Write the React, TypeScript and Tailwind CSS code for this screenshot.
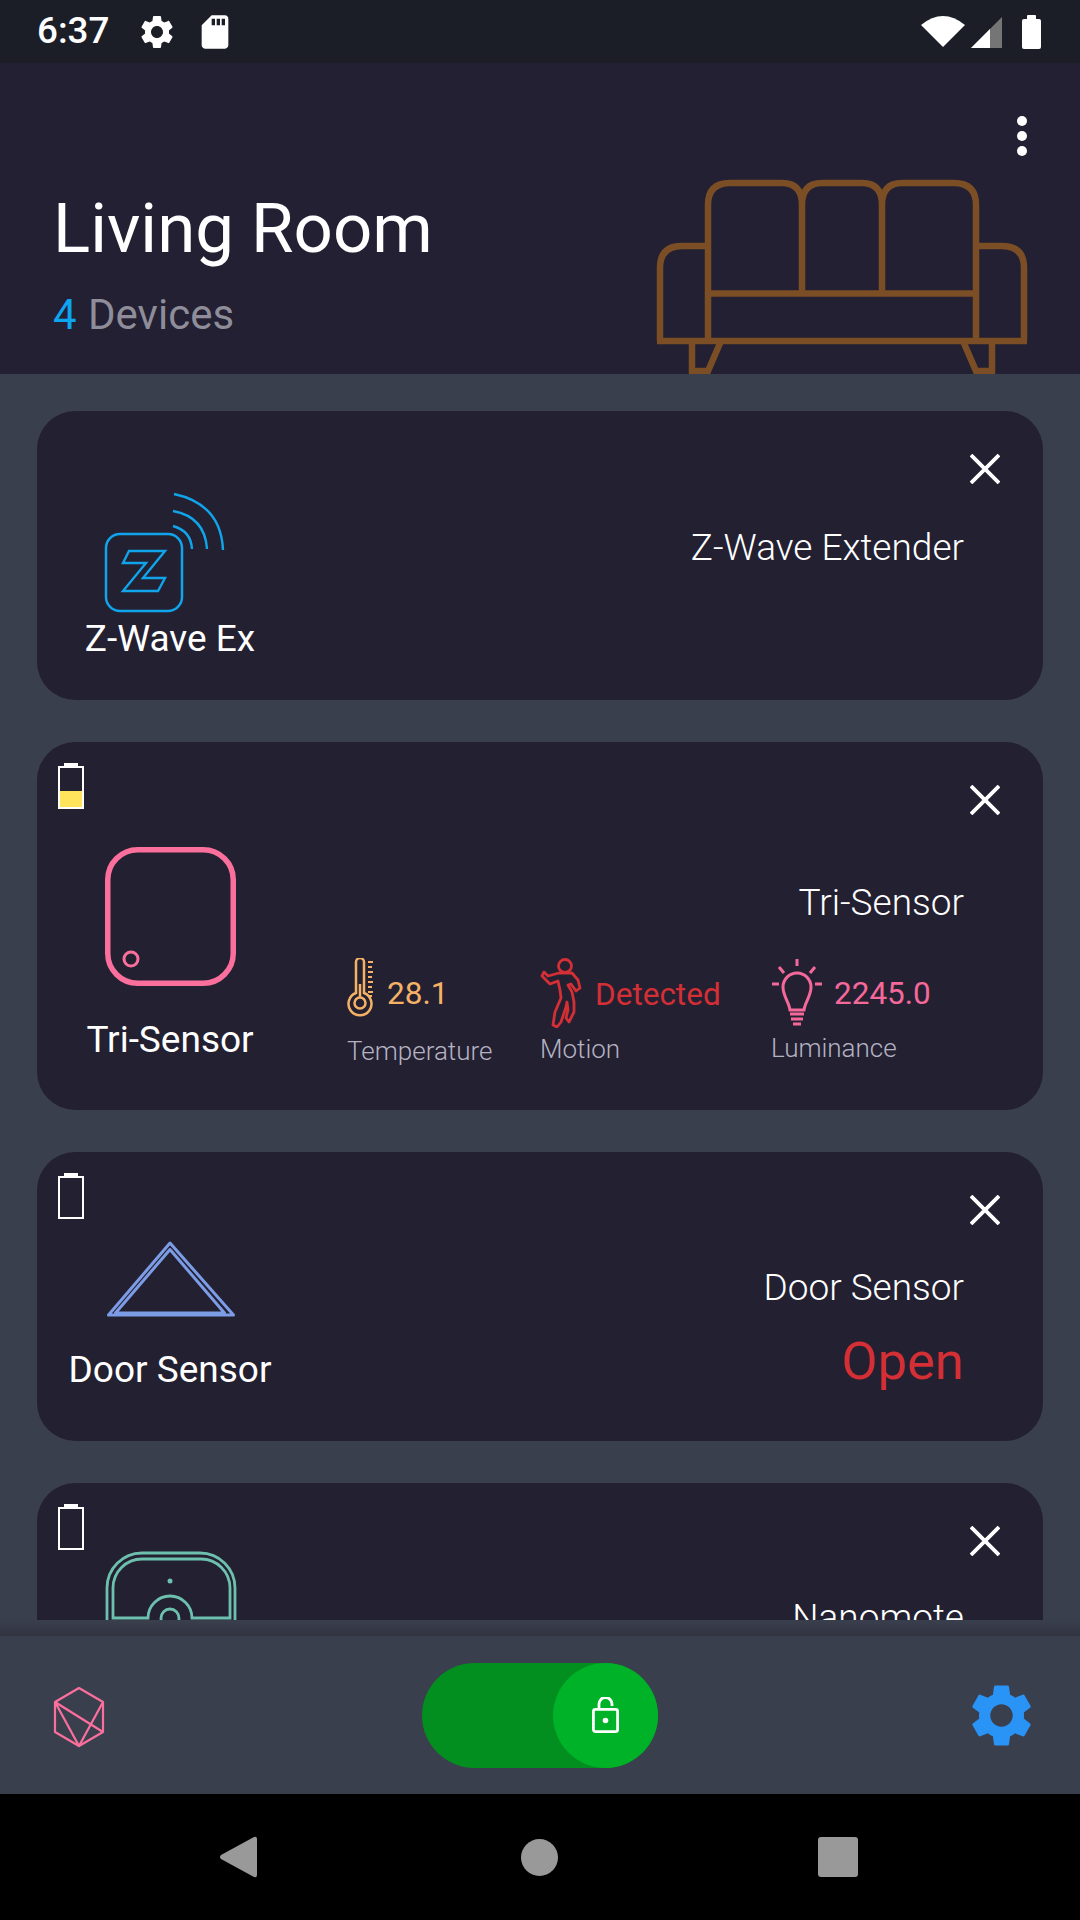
import type { ReactNode } from 'react'

const SETTINGS_PATH =
    'M19.14 12.94c.04-.3.06-.61.06-.94 0-.32-.02-.64-.07-.94l2.03-1.58c.18-.14.23-.41.12-.61l-1.92-3.32c-.12-.22-.37-.29-.59-.22l-2.39.96c-.5-.38-1.03-.7-1.62-.94l-.36-2.54c-.04-.24-.24-.41-.48-.41h-3.84c-.24 0-.43.17-.47.41l-.36 2.54c-.59.24-1.13.57-1.62.94l-2.39-.96c-.22-.08-.47 0-.59.22L2.74 8.87c-.12.21-.08.47.12.61l2.03 1.58c-.05.3-.09.63-.09.94s.02.64.07.94l-2.03 1.58c-.18.14-.23.41-.12.61l1.92 3.32c.12.22.37.29.59.22l2.39-.96c.5.38 1.03.7 1.62.94l.36 2.54c.05.24.24.41.48.41h3.84c.24 0 .44-.17.47-.41l.36-2.54c.59-.24 1.13-.56 1.62-.94l2.39.96c.22.08.47 0 .59-.22l1.92-3.32c.12-.22.07-.47-.12-.61l-2.01-1.58zM12 15.6c-1.98 0-3.6-1.62-3.6-3.6s1.62-3.6 3.6-3.6 3.6 1.62 3.6 3.6-1.62 3.6-3.6 3.6z'

function Battery({ level = 0 }: { level?: number }) {
    return (
        <div className="absolute left-[21px] top-[21px] flex w-[26px] flex-col items-center">
            <div className="h-[3px] w-[14px] bg-white" />
            <div className="flex h-[43px] w-[26px] flex-col justify-end border-2 border-white">
                {level > 0 && <div className="bg-[#ffe45c]" style={{ height: `${level}%` }} />}
            </div>
        </div>
    )
}

function CloseIcon() {
    return (
        <svg className="absolute right-[43px] top-[43px]" width="30" height="30" viewBox="0 0 30 30" fill="none" stroke="#fff" strokeWidth="3.8">
            <path d="M1 1 29 29M29 1 1 29" />
        </svg>
    )
}

function Card({ className, battery, children }: { className: string; battery?: number; children: ReactNode }) {
    return (
        <div className={`relative flex shrink-0 rounded-[38px] bg-[#232032] ${className}`}>
            {battery !== undefined && <Battery level={battery} />}
            <CloseIcon />
            {children}
        </div>
    )
}

function Sofa() {
    return (
        <svg width="400" height="214" viewBox="0 0 400 214" fill="none" stroke="#7c4e25" strokeWidth="6.5" className="block">
            <path d="M68 181V45Q68 23 90 23H142Q162 23 162 45V133M162 45Q162 23 182 23H222Q242 23 242 45V133M242 45Q242 23 262 23H314Q336 23 336 45V181" />
            <path d="M68 133.5H336M68 86H42Q20 86 20 108V181M336 86H362Q384 86 384 108V181M17 181H387" />
            <path d="M52 181V211H68L81 181M352 181V211H336L323 181" />
        </svg>
    )
}

function ZWaveIcon() {
    return (
        <svg width="140" height="125" viewBox="60 20 140 125" fill="none" stroke="#10a5ea" strokeWidth="2.5">
            <rect x="66" y="64" width="76" height="77" rx="14" />
            <path d="M89 81H125L103 108H125L118 121H83L106 93H83Z" strokeWidth="2.4" />
            <path d="M133 56Q151 61 152 79M133 41Q165 47 167 79M134 24Q181 34 183 80" strokeWidth="2.4" />
        </svg>
    )
}

function NanomoteIcon() {
    return (
        <svg width="140" height="90" viewBox="0 0 140 90" fill="none" stroke="#6dbfae" strokeWidth="2.8" className="shrink-0">
            <path d="M7 90V38A35 35 0 0 1 42 3H100A35 35 0 0 1 135 38V90" />
            <path d="M13 68V38A29 29 0 0 1 42 9H101A29 29 0 0 1 130 38V68H92A22 22 0 0 0 48 68Z" />
            <circle cx="70" cy="68" r="9" />
            <circle cx="70" cy="31" r="2.5" fill="#6dbfae" stroke="none" />
        </svg>
    )
}

function Stat({ width, icon, gap, value, color, label, labelClass }: { width: string; icon: ReactNode; gap: string; value: string; color: string; label: string; labelClass: string }) {
    return (
        <div className={`flex flex-col ${width}`}>
            <div className={`flex items-center ${gap}`}>
                {icon}
                <span className={`mt-[3px] text-[31.5px] leading-[40px] ${color}`}>{value}</span>
            </div>
            <span className={`text-[26px] font-light leading-[36px] text-[#b4b3c2] ${labelClass}`}>{label}</span>
        </div>
    )
}

export default function App() {
    return (
        <div className="flex h-[1920px] w-[1080px] flex-col overflow-hidden bg-[#3a3f4e] font-[Roboto,sans-serif] text-white">
            {/* status bar */}
            <div className="flex h-[63px] shrink-0 items-center bg-[#1c1e27] pl-[37px] pr-[39px]">
                <span className="w-[100px] text-[36.75px] font-medium leading-none">6:37</span>
                <svg width="40" height="40" viewBox="0 0 24 24" fill="#fff"><path d={SETTINGS_PATH} /></svg>
                <svg width="40" height="40" viewBox="0 0 24 24" fill="#fff" className="ml-[18px]"><path d="M18 2h-8L4.02 8 4 20c0 1.1.9 2 2 2h12c1.1 0 2-.9 2-2V4c0-1.1-.9-2-2-2zm-6 6h-2V4h2v4zm3 0h-2V4h2v4zm3 0h-2V4h2v4z" /></svg>
                <svg width="44" height="32" viewBox="0 0 44 32" fill="#fff" className="ml-auto">
                    <path d="M0 9Q22-9 44 9L22 31Z" />
                </svg>
                <svg width="31" height="32" viewBox="0 0 31 32" className="ml-[6px]">
                    <path d="M0 32 31 1V32Z" fill="#757575" />
                    <path d="M0 32 19 13V32Z" fill="#fff" />
                </svg>
                <div className="ml-[20px] flex w-[19px] flex-col items-center">
                    <div className="h-[4px] w-[9px] rounded-t-[1px] bg-white" />
                    <div className="h-[30px] w-[19px] rounded-[2px] bg-white" />
                </div>
            </div>

            {/* room header */}
            <div className="flex h-[311px] shrink-0 justify-between bg-[#222032] pl-[53px] pr-[40px]">
                <div className="flex flex-col pt-[121px]">
                    <h1 className="text-[69px] leading-[90px]">Living Room</h1>
                    <p className="mt-[16px] text-[42px] leading-[50px] text-[#8e8d99]">
                        <span className="mr-[1px] text-[#0ea5f0]">4</span> Devices
                    </p>
                </div>
                <div className="flex flex-col items-end">
                    <div className="mr-[13px] mt-[53px] flex flex-col gap-[5px]">
                        <div className="h-[10px] w-[10px] rounded-full bg-white" />
                        <div className="h-[10px] w-[10px] rounded-full bg-white" />
                        <div className="h-[10px] w-[10px] rounded-full bg-white" />
                    </div>
                    <div className="mt-auto"><Sofa /></div>
                </div>
            </div>

            {/* device list */}
            <div className="flex h-[1246px] shrink-0 flex-col gap-[42px] overflow-hidden px-[37px] pt-[37px]">
                <Card className="h-[289px]">
                    <div className="flex w-[266px] flex-col items-center pt-[79px]">
                        <ZWaveIcon />
                        <span className="mt-[2px] text-[37px] leading-[44px]">Z-Wave Ex</span>
                    </div>
                    <div className="flex flex-1 flex-col items-end pr-[79px] pt-[115px]">
                        <span className="text-[37px] font-light leading-[44px]">Z-Wave Extender</span>
                    </div>
                </Card>

                <Card className="h-[368px]" battery={42}>
                    <div className="flex w-[266px] flex-col items-center pt-[105px]">
                        <svg width="131" height="139" viewBox="0 0 131 139" fill="none" stroke="#fb6f9c">
                            <rect x="2.750" y="2.750" width="125.500" height="133.500" rx="30" strokeWidth="5.500" />
                            <circle cx="26" cy="112" r="7" strokeWidth="3" />
                        </svg>
                        <span className="mt-[32px] text-[37px] leading-[44px]">Tri-Sensor</span>
                    </div>
                    <div className="flex flex-1 flex-col items-end pr-[79px] pt-[139px]">
                        <span className="text-[37px] font-light leading-[44px]">Tri-Sensor</span>
                        <div className="ml-[44px] mt-[33px] flex self-start">
                            <Stat
                                width="w-[193px]"
                                gap="gap-[13px]"
                                value="28.1"
                                color="text-[#f5b266]"
                                label="Temperature"
                                labelClass="mt-[7px]"
                                icon={
                                    <svg width="27" height="68" viewBox="8 9 27 68" fill="none" stroke="#f5b266" strokeWidth="2.500">
                                        <path d="M17 44V13A4 4 0 0 1 25 13V44A11.500 11.500 0 1 1 17 44Z" />
                                        <circle cx="21" cy="54" r="5.500" />
                                        <path d="M21 35V48" />
                                        <path d="M29 13H34M29 18H33M29 23H34M29 28H33M29 33H34M29 38H33M29 43H34M29 47H33" strokeWidth="2" />
                                    </svg>
                                }
                            />
                            <Stat
                                width="w-[231px]"
                                gap="gap-[13px]"
                                value="Detected"
                                color="text-[#d32f35]"
                                label="Motion"
                                labelClass="mt-[3px]"
                                icon={
                                    <svg width="42" height="70" viewBox="10 8 42 70" fill="none" stroke="#d32f35" strokeWidth="2.800" strokeLinejoin="round">
                                        <circle cx="35" cy="16" r="6.500" />
                                        <path d="M29 23 18 26 14 22 12 26 20 34 28 31 30 40 31 48 25 62 23 75 27 77 31 72 36 57 37 52 38 60 36 68 39 72 44 62 44 52 42 42 38 35 41 34 46 41 50 38 48 30 42 23Z" />
                                    </svg>
                                }
                            />
                            <Stat
                                width="w-auto"
                                gap="gap-[11px]"
                                value="2245.0"
                                color="text-[#f4689a]"
                                label="Luminance"
                                labelClass="mt-[4px]"
                                icon={
                                    <svg width="52" height="68" viewBox="10 8 52 68" fill="none" stroke="#f4689a" strokeWidth="3">
                                        <path d="M36 9V16M18 17 23 23M54 17 49 23M11 34H18M54 34H61" />
                                        <path d="M29 60C28 52 22 46 22 37A14 14 0 0 1 50 37C50 46 44 52 43 60Z" />
                                        <path d="M29 64H43M30 69H42M32 74H40" />
                                    </svg>
                                }
                            />
                        </div>
                    </div>
                </Card>

                <Card className="h-[289px]" battery={0}>
                    <div className="flex w-[266px] flex-col items-center pt-[83px]">
                        <svg width="140" height="90" viewBox="0 0 140 90" fill="none" stroke="#7d9ce6" strokeLinejoin="round">
                            <path d="M70 8 8.500 80H133.500Z" strokeWidth="3" />
                            <path d="M70 14.500 15.500 78H124.500Z" strokeWidth="3" />
                        </svg>
                        <span className="mt-[23px] text-[37px] leading-[44px]">Door Sensor</span>
                    </div>
                    <div className="flex flex-1 flex-col items-end pr-[79px] pt-[114px]">
                        <span className="text-[37px] font-light leading-[44px]">Door Sensor</span>
                        <span className="mt-[21px] text-[52.5px] leading-[60px] text-[#d32f35]">Open</span>
                    </div>
                </Card>

                <Card className="h-[289px]" battery={0}>
                    <div className="flex w-[266px] flex-col items-center pt-[67px]">
                        <NanomoteIcon />
                    </div>
                    <div className="flex flex-1 flex-col items-end pr-[79px] pt-[113px]">
                        <span className="text-[37px] font-light leading-[44px]">Nanomote</span>
                    </div>
                </Card>
            </div>

            {/* shadow above bottom bar */}
            <div className="h-[16px] shrink-0 bg-gradient-to-b from-[#3a3f4e] to-[#31343f]" />

            {/* bottom bar */}
            <div className="grid h-[158px] shrink-0 grid-cols-[422px_236px_1fr] items-center bg-[#3a3f4e]">
                <svg width="80" height="80" viewBox="0 0 80 80" fill="none" stroke="#fb6f9c" strokeWidth="2.200" strokeLinejoin="round" className="ml-[40px]">
                    <path d="M39 13 63 27V57L39 71 15 57V27Z" />
                    <path d="M15 27 63 57M15 27 39 71 63 27" />
                </svg>
                <div className="flex h-[105px] justify-end rounded-full bg-[#038f1f]">
                    <div className="flex h-[105px] w-[105px] items-center justify-center rounded-full bg-[#00b227]">
                        <svg width="27" height="36" viewBox="0 0 27 36" fill="none" stroke="#fff" strokeWidth="2.800">
                            <path d="M7 12V7A6.500 6.500 0 0 1 20 7V9" />
                            <rect x="1.400" y="12.400" width="24.200" height="22.200" rx="2" />
                            <circle cx="13.500" cy="23.500" r="2.800" fill="#fff" stroke="none" />
                        </svg>
                    </div>
                </div>
                <svg width="75" height="75" viewBox="0 0 24 24" fill="#2a93f6" className="mr-[41px] justify-self-end"><path d={SETTINGS_PATH} /></svg>
            </div>

            {/* android nav */}
            <div className="flex h-[126px] shrink-0 items-center bg-black pl-[220px]">
                <svg width="37" height="42" viewBox="0 0 37 42" fill="#999">
                    <path d="M34 1 1 19Q-1 21 1 23L34 41Q37 42 37 39V3Q37 0 34 1Z" />
                </svg>
                <div className="ml-[264px] h-[37px] w-[37px] rounded-full bg-[#999]" />
                <div className="ml-[260px] h-[40px] w-[40px] rounded-[3px] bg-[#999]" />
            </div>
        </div>
    )
}
